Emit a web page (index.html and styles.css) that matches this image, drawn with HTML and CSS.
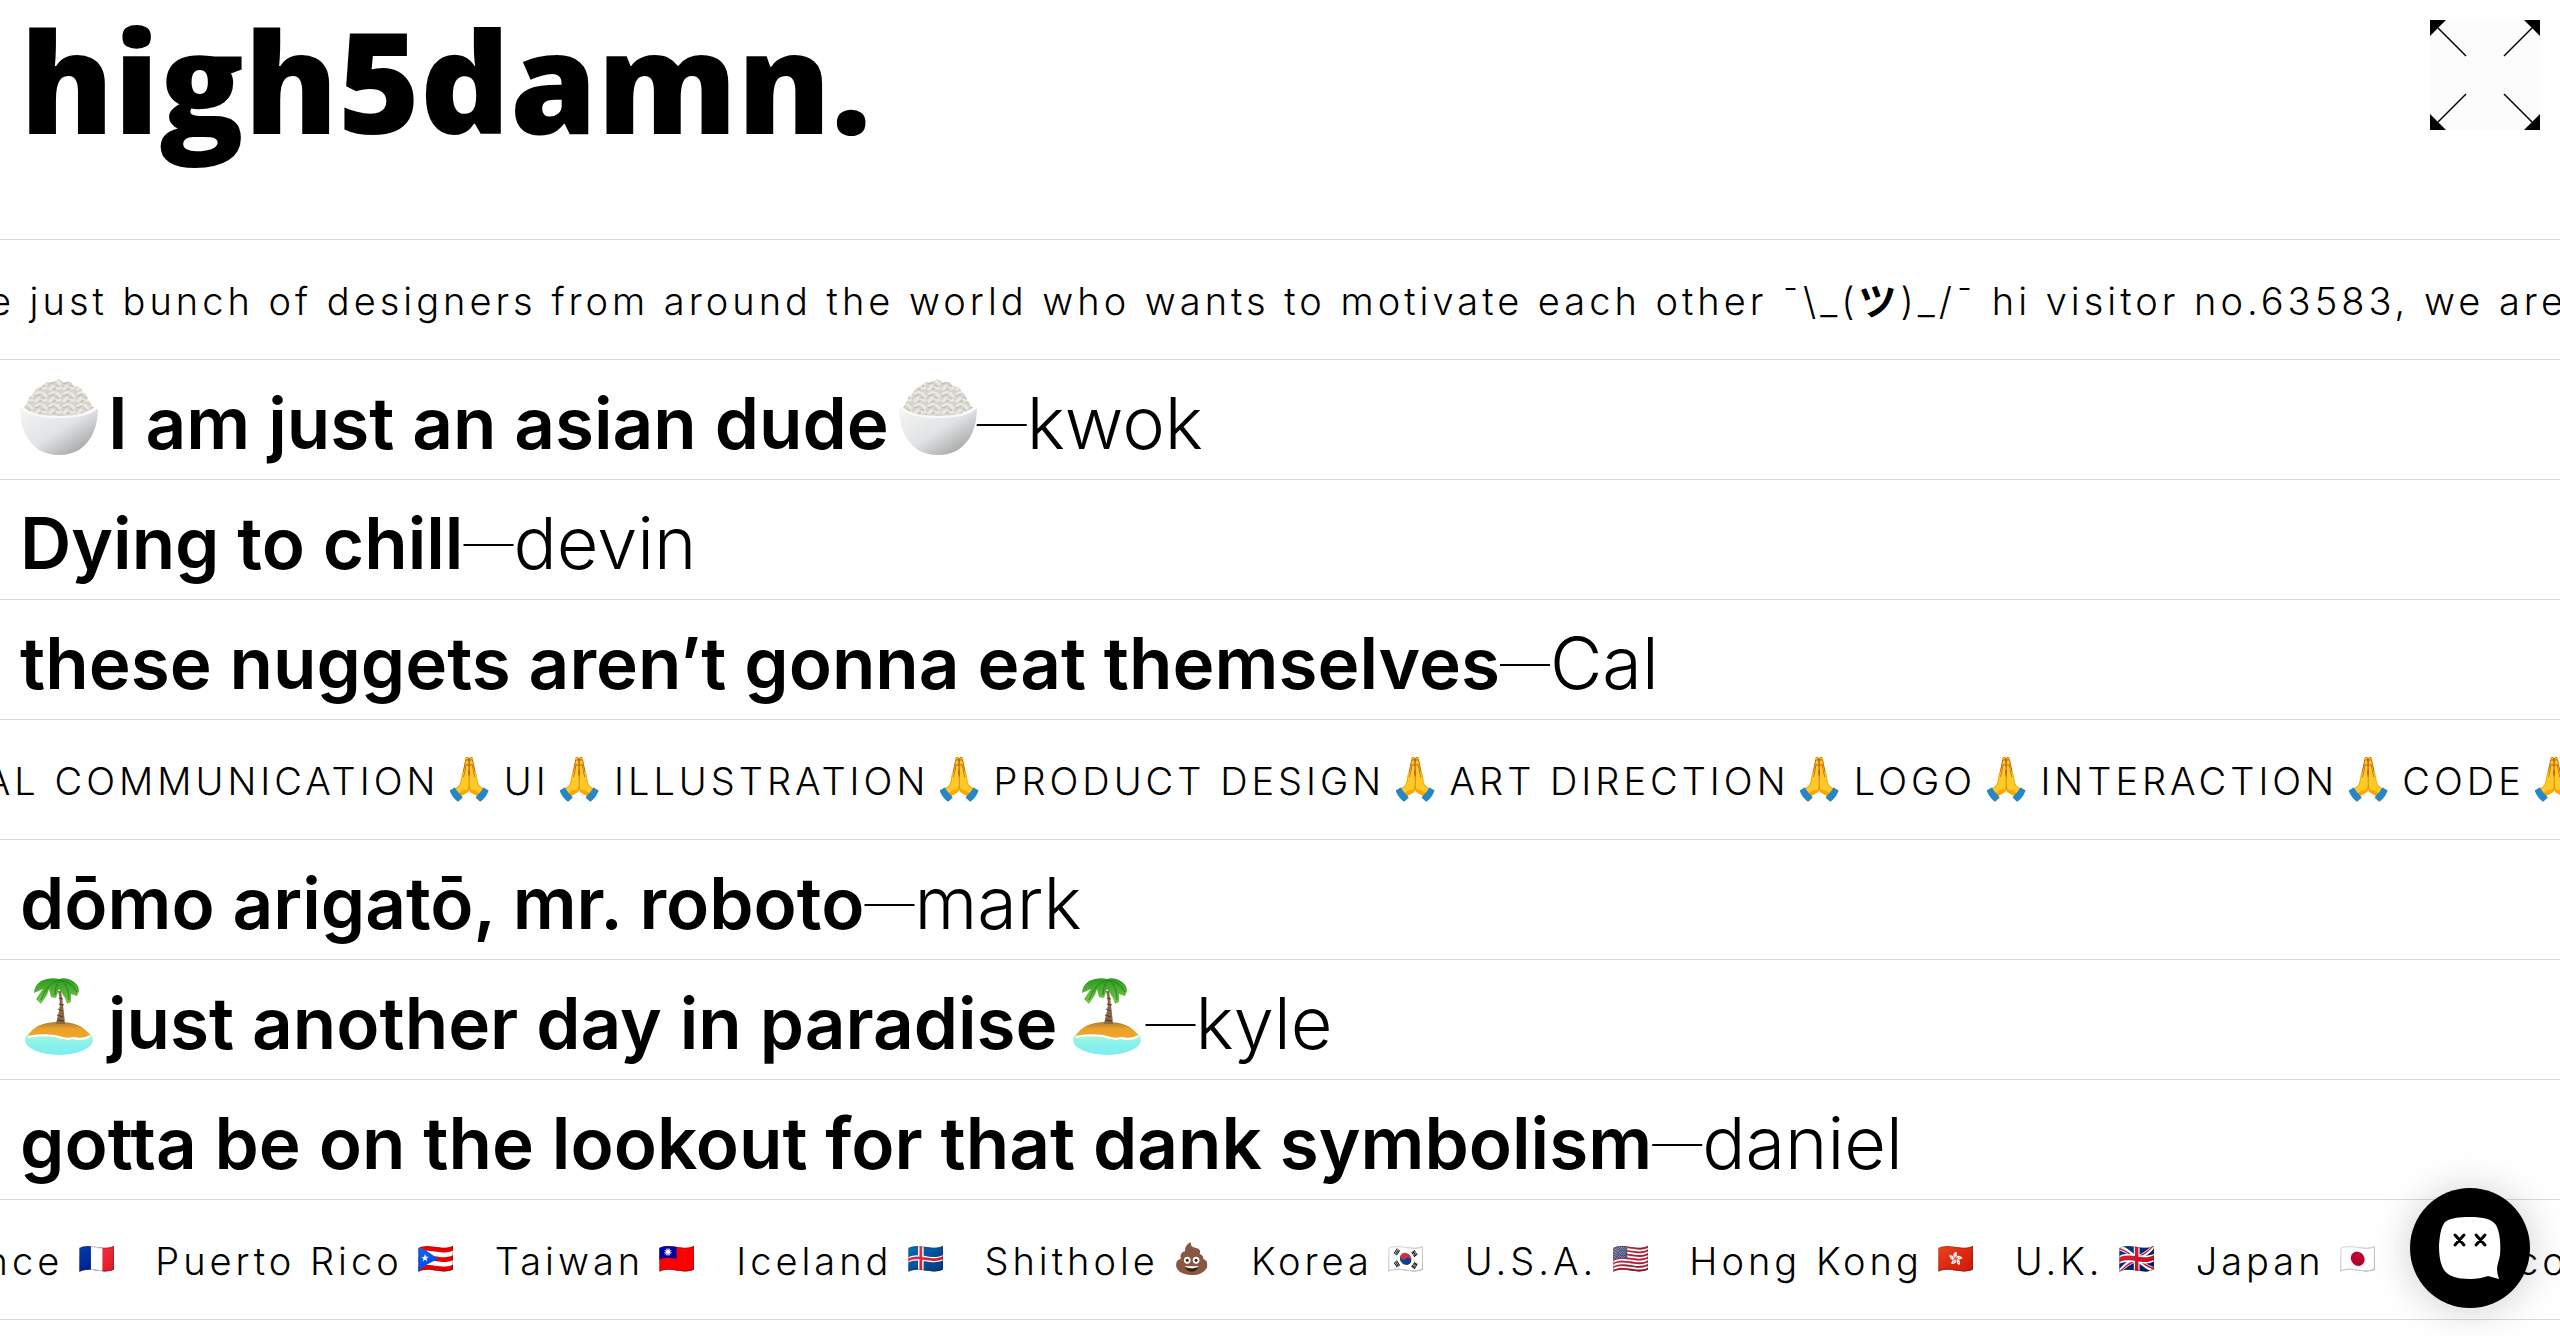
FILE: index.html
```
<!DOCTYPE html>
<html lang="en">
<head>
    <meta charset="UTF-8">
    <meta name="viewport" content="width=device-width, initial-scale=1.0">
    <title>high5damn.</title>
    <link rel="stylesheet" href="styles.css">
</head>
<body>
    <!-- shared emoji drawings -->
    <svg class="defs" aria-hidden="true">
        <defs>
            <linearGradient id="bowl" x1="0" y1="0" x2="1" y2="1">
                <stop offset="0" stop-color="#f4f5f5"/>
                <stop offset="0.5" stop-color="#e2e3e4"/>
                <stop offset="1" stop-color="#8f8f90"/>
            </linearGradient>
            <linearGradient id="sand" x1="0" y1="0" x2="0" y2="1">
                <stop offset="0" stop-color="#a87a2c"/>
                <stop offset="0.4" stop-color="#e9a02c"/>
                <stop offset="1" stop-color="#f5a623"/>
            </linearGradient>
            <linearGradient id="sea" x1="0" y1="0" x2="0" y2="1">
                <stop offset="0" stop-color="#f2f3c4"/>
                <stop offset="0.55" stop-color="#8ff3e6"/>
                <stop offset="1" stop-color="#7cecf5"/>
            </linearGradient>
            <linearGradient id="leaf" x1="0" y1="0" x2="0" y2="1">
                <stop offset="0" stop-color="#2c9a1d"/>
                <stop offset="1" stop-color="#7cc850"/>
            </linearGradient>
            <pattern id="grains" width="14" height="12" patternUnits="userSpaceOnUse">
                <rect width="14" height="12" fill="#d6d3cd"/>
                <g stroke="#ece9e4" stroke-width="3" stroke-linecap="round">
                    <path d="M2 3l4 -2M9 2l3 3M2 10l3 -3M8 9l4 0"/>
                </g>
                <path d="M1 5l5 -2M8 6l3 2M5 11l3 -2" stroke="#b9b4ac" stroke-width="1"/>
            </pattern>
            <symbol id="rice" viewBox="0 0 78 76">
                <path d="M4 29Q8 22 10 17L14 14L16 9L22 7L26 3L33 3L38 0L44 3L51 3L54 7L60 8L63 13L67 16L69 22L74 29Q60 38 39 38Q16 38 4 29Z" fill="url(#grains)"/>
                <path d="M0 28Q10 38 39 38Q68 38 78 28Q78 58 59 71Q50 76 39 76Q28 76 19 71Q0 58 0 28Z" fill="url(#bowl)"/>
                <path d="M0 28Q10 38 39 38Q68 38 78 28" fill="none" stroke="#f8f9fa" stroke-width="2"/>
            </symbol>
            <symbol id="island" viewBox="0 0 68 78">
                <ellipse cx="34" cy="63" rx="34" ry="15" fill="url(#sea)"/>
                <path d="M3 59Q9 46 31 45Q56 44 65 58Q60 62 50 60Q44 63 34 59Q16 56 3 59Z" fill="url(#sand)"/>
                <path d="M3 60Q14 57 30 59Q42 63 48 61Q58 64 65 59" fill="none" stroke="#fff" stroke-width="2"/>
                <path d="M33 14Q36 24 34 34Q32 42 31 47L40 47Q39 34 36 14Z" fill="#8a6844"/>
                <path d="M34 21l4 1M34 27l5 1M33 32l5 2M32 38l6 2M32 43l7 1" stroke="#533a22" stroke-width="1"/>
                <path d="M34 2Q24 0 16 4Q9 9 9 16L18 12L11 22L16 27L22 18L24 12L26 20L31 21L34 12L40 21L42 27L46 25L46 17L52 19L54 14Q54 7 46 3Q40 0 34 2Z" fill="url(#leaf)"/>
                <path d="M34 3Q22 6 16 23M35 3Q30 9 30 18M36 3Q44 9 44 23M35 3Q46 5 52 15" fill="none" stroke="#24851b" stroke-width="1"/>
            </symbol>
        </defs>
    </svg>

    <header class="header">
        <h1 class="title">high5damn.</h1>
        <button class="expand" type="button" aria-label="Fullscreen">
            <svg viewBox="0 0 110 110">
                <path d="M0 0H16L0 16ZM110 0V16L94 0ZM0 110V94L16 110ZM110 110H94L110 94Z"/>
                <path d="M8 8L36 36M102 8L74 36M8 102L36 74M102 102L74 74" stroke="#000" stroke-width="1.5"/>
            </svg>
        </button>
    </header>

    <main>
        <div class="marquee">
            <p class="track intro">we are just bunch of designers from around the world who wants to motivate each other ¯\_(<b>ツ</b>)_/¯ hi visitor no.63583, we are just bunch of designers</p>
        </div>
        <p class="quote"><svg class="rice" role="img" aria-label="rice"><use href="#rice"/></svg><strong>I am just an asian dude</strong><svg class="rice" role="img" aria-label="rice"><use href="#rice"/></svg><span class="dash">—</span>kwok</p>
        <p class="quote"><strong>Dying to chill</strong><span class="dash">—</span>devin</p>
        <p class="quote"><strong>these nuggets aren’t gonna eat themselves</strong><span class="dash">—</span>Cal</p>
        <div class="marquee">
            <p class="track skills">VISUAL COMMUNICATION<i>🙏</i>UI<i>🙏</i>ILLUSTRATION<i>🙏</i>PRODUCT DESIGN<i>🙏</i>ART DIRECTION<i>🙏</i>LOGO<i>🙏</i>INTERACTION<i>🙏</i>CODE<i>🙏</i>VISUAL COMMUNICATION</p>
        </div>
        <p class="quote"><strong>dōmo arigatō, mr. roboto</strong><span class="dash">—</span>mark</p>
        <p class="quote"><svg class="island" role="img" aria-label="island"><use href="#island"/></svg><strong>just another day in paradise</strong><svg class="island" role="img" aria-label="island"><use href="#island"/></svg><span class="dash">—</span>kyle</p>
        <p class="quote"><strong>gotta be on the lookout for that dank symbolism</strong><span class="dash">—</span>daniel</p>
        <div class="marquee">
            <ul class="track places">
                <li>France <i>🇫🇷</i></li>
                <li>Puerto Rico <i>🇵🇷</i></li>
                <li>Taiwan <i>🇹🇼</i></li>
                <li>Iceland <i>🇮🇸</i></li>
                <li>Shithole <i>💩</i></li>
                <li>Korea <i>🇰🇷</i></li>
                <li>U.S.A. <i>🇺🇸</i></li>
                <li>Hong Kong <i>🇭🇰</i></li>
                <li>U.K. <i>🇬🇧</i></li>
                <li>Japan <i>🇯🇵</i></li>
                <li>Mexico <i>🇲🇽</i></li>
            </ul>
        </div>
    </main>

    <button class="chat" type="button" aria-label="Open chat">
        <svg viewBox="0 0 62 62">
            <path d="M31 0C44 0 53 2 57 8C61 15 62 28 61 38C60 44 58 48 58 52Q58 56 60 62L49 59Q41 62 31 62C18 62 9 59 5 53C1 46 0 38 0 28C1 17 2 10 6 5C11 1 20 0 31 0Z" fill="#fff"/>
            <path d="M16 18L25 28M25 18L16 28M37 18L46 28M46 18L37 28" stroke="#000" stroke-width="3" stroke-linecap="round"/>
        </svg>
    </button>
</body>
</html>
```
FILE: styles.css
```
html, body {
    height: 100%;
    margin: 0;
    overflow: hidden;
    background: white;
    color: black;
    font-family: Inter, "Liberation Sans", sans-serif;
}
.defs {
    position: absolute;
    width: 0;
    height: 0;
}
.header {
    display: flex;
    justify-content: space-between;
    align-items: flex-start;
    box-sizing: border-box;
    height: 240px;
    padding: 0 20px;
    border-bottom: 1px solid #d8d8d8;
}
.title {
    margin: 0;
    font-family: "Open Sans", sans-serif;
    font-size: 140px;
    font-weight: 800;
    line-height: 160px;
}
.expand {
    width: 110px;
    height: 110px;
    margin-top: 20px;
    padding: 0;
    border: 0;
    background: #fcfcfc;
}
.expand svg {
    display: block;
}
.marquee, .quote {
    box-sizing: border-box;
    height: 120px;
    margin: 0;
    border-bottom: 1px solid #d8d8d8;
    white-space: nowrap;
    overflow: hidden;
}
.quote {
    padding: 0 20px;
    font-size: 72px;
    font-weight: 300;
    line-height: 126px;
}
.quote strong {
    font-size: 71px;
    font-weight: 600;
}
.quote svg {
    width: 78px;
    height: 76px;
    vertical-align: -6px;
}
.quote .island {
    height: 78px;
}
.quote svg + strong {
    margin-left: 10px;
}
.quote strong + svg {
    margin-left: 10px;
}
.dash {
    font-size: 50px;
    font-weight: 200;
    line-height: 1;
    vertical-align: 8px;
}
.track {
    display: flex;
    margin: 0;
    padding: 0;
    font-size: 38px;
    font-weight: 300;
    line-height: 122px;
    letter-spacing: 4px;
    list-style: none;
}
.track b {
    font-family: "Noto Sans CJK JP", sans-serif;
    font-weight: 700;
    line-height: 1;
}
.track i {
    font-family: "Noto Color Emoji", sans-serif;
    font-style: normal;
    line-height: 1;
}
.intro, .skills {
    display: block;
}
.intro {
    margin-left: -128px;
}
.skills {
    margin-left: -118px;
}
.skills i {
    margin: 0 4px;
    font-size: 42px;
    vertical-align: 2px;
}
.places {
    gap: 36px;
    margin-left: -82px;
}
.places i {
    font-size: 30px;
    vertical-align: 6px;
}
.chat {
    position: fixed;
    right: 30px;
    bottom: 28px;
    display: flex;
    justify-content: center;
    align-items: center;
    width: 120px;
    height: 120px;
    padding: 0;
    border: 0;
    border-radius: 50%;
    background: black;
    box-shadow: 0 2px 40px rgba(0, 0, 0, 0.2);
}
.chat svg {
    width: 62px;
    height: 62px;
}
```
